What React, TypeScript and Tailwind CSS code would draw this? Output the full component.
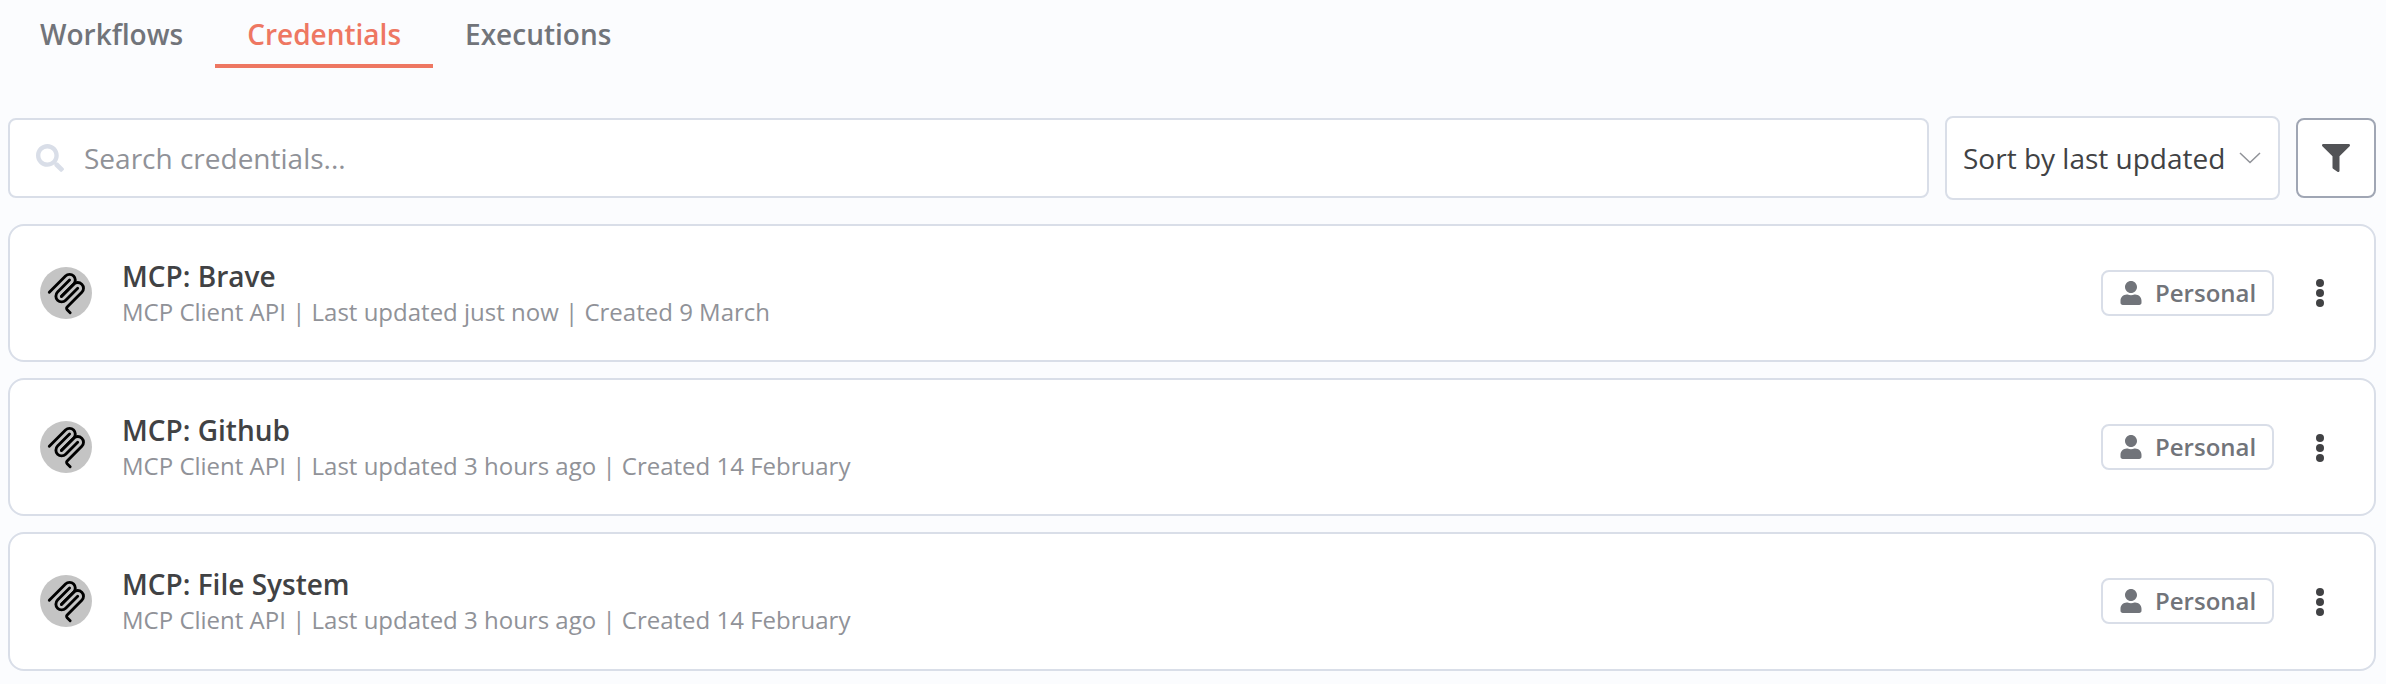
import { FaFilter, FaSearch, FaUser } from 'react-icons/fa';

const tabs = ['Workflows', 'Credentials', 'Executions'];

const credentials = [
  { name: 'MCP: Brave', updated: 'Last updated just now', created: 'Created 9 March' },
  { name: 'MCP: Github', updated: 'Last updated 3 hours ago', created: 'Created 14 February' },
  { name: 'MCP: File System', updated: 'Last updated 3 hours ago', created: 'Created 14 February' },
];

function McpLogo() {
  return (
    <span className="flex size-[52px] shrink-0 items-center justify-center rounded-full bg-[#c4c4c4]">
      <svg viewBox="0 0 180 180" className="size-[43px]" fill="none" stroke="#000" strokeWidth="12" strokeLinecap="round">
        <path d="M18 84.8528L85.8822 16.9706C95.2548 7.59798 110.451 7.59798 119.823 16.9706C129.196 26.3431 129.196 41.5391 119.823 50.9117L68.5581 102.177" />
        <path d="M69.2652 101.47L119.823 50.9117C129.196 41.5391 144.392 41.5391 153.765 50.9117L154.118 51.2652C163.491 60.6378 163.491 75.8338 154.118 85.2063L92.7248 146.6C89.6006 149.724 89.6006 154.789 92.7248 157.913L105.331 170.52" />
        <path d="M102.853 33.9411L52.6482 84.1457C43.2756 93.5183 43.2756 108.714 52.6482 118.087C62.0208 127.459 77.2167 127.459 86.5893 118.087L136.794 67.8822" />
      </svg>
    </span>
  );
}

function CredentialCard({ name, updated, created }: (typeof credentials)[number]) {
  return (
    <li className="group flex h-[138px] items-center rounded-2xl border-2 border-[#d9dee8] bg-white pl-[30px] pr-[50px] last:h-[139px] last:pb-px">
      <McpLogo />
      <div className="ml-[30px] flex-1 pt-0.5">
        <h2 className="text-[28px] font-semibold leading-[36px] text-[#414244]">{name}</h2>
        <p className="text-[24px] leading-[36px] text-[#909298]">
          MCP Client API | {updated} | {created}
        </p>
      </div>
      <span className="flex h-[46px] w-[173px] items-center rounded-lg border-2 border-[#d9dee8] pl-[17px] text-[24px] font-semibold text-[#71747a]">
        <FaUser className="mr-[13px] h-6 w-[22px]" />
        Personal
      </span>
      <button className="ml-[42px] group-even:pt-0.5 group-last:pt-0.5" aria-label="Actions">
        <svg viewBox="0 0 8 28" className="h-7 w-2" fill="#414244">
          <circle cx="4" cy="4" r="4" />
          <circle cx="4" cy="14" r="4" />
          <circle cx="4" cy="24" r="4" />
        </svg>
      </button>
    </li>
  );
}

export default function App() {
  return (
    <main className="h-[684px] w-[2386px] overflow-hidden bg-[#fbfcfe] pl-2 pr-[10px] font-['Open_Sans',sans-serif]">
      <nav className="flex h-[68px] text-[28px] font-semibold leading-[38px]">
        {tabs.map((tab) => (
          <a
            key={tab}
            className={
              tab === 'Credentials'
                ? 'border-b-4 border-[#ee7762] px-8 pt-[15px] text-[#ee7762]'
                : 'px-8 pt-[15px] text-[#71747a]'
            }
          >
            {tab}
          </a>
        ))}
      </nav>
      <div className="mt-12 flex h-[84px] items-center gap-4">
        <div className="flex h-20 flex-1 items-center rounded-lg border-2 border-[#d9dee8] bg-white pl-[26px]">
          <FaSearch className="size-7 text-[#d9dee8]" />
          <span className="ml-5 text-[28px] text-[#909298]">Search credentials...</span>
        </div>
        <div className="flex h-[84px] w-[335px] items-center rounded-lg border-2 border-[#d9dee8] bg-white pl-4 text-[28px] text-[#414244]">
          <span className="w-[276px] whitespace-nowrap">Sort by last updated</span>
          <svg viewBox="0 0 22 12" className="h-3 w-[22px]" fill="none" stroke="#909298" strokeWidth="1.5">
            <path d="M1 1L11 10.5L21 1" />
          </svg>
        </div>
        <button className="flex size-20 items-center justify-center rounded-lg border-2 border-[#a0a6b4] bg-white" aria-label="Filter">
          <FaFilter className="size-7 text-[#525356]" />
        </button>
      </div>
      <ul className="mt-6 flex flex-col gap-4">
        {credentials.map((c) => (
          <CredentialCard key={c.name} {...c} />
        ))}
      </ul>
    </main>
  );
}
